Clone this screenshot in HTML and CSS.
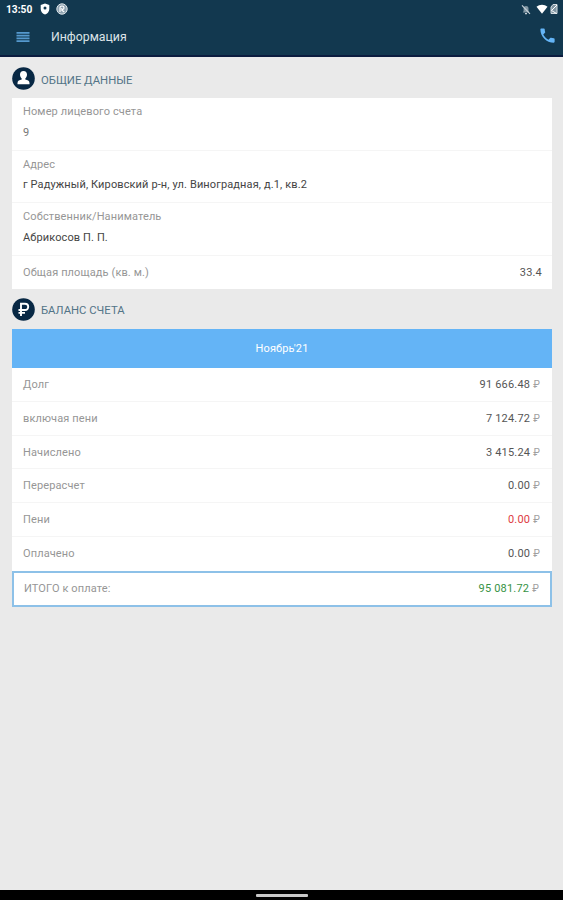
FILE: index.html
```html
<!DOCTYPE html>
<html lang="ru">
<head>
    <meta charset="UTF-8">
    <meta name="viewport" content="width=device-width, initial-scale=1.0">
    <title>Информация</title>
    <link rel="stylesheet" href="styles.css">
</head>
<body>
<header>
    <div class="status-bar">
        <span class="time">13:50</span>
        <svg width="10" height="12" viewBox="0 0 10 12"><path d="M5 0.5L9.3 2V6C9.3 8.6 7.5 10.6 5 11.6C2.5 10.6 0.7 8.6 0.7 6V2Z" fill="#fff"/><circle cx="5" cy="5" r="1.5" fill="#12384f"/></svg>
        <svg class="icon-at" width="12" height="12" viewBox="0 0 12 12"><circle cx="6" cy="6" r="5.2" fill="#8ea2b0" stroke="#dfe6ea" stroke-width="1"/><path d="M4 9V4.5C4 2.5 8 2.5 8 4.7C8 6.8 5.5 7 5.5 5.3M5.5 7L8.3 9" fill="none" stroke="#fff" stroke-width="1.2"/></svg>
        <div class="status-right">
            <svg width="10" height="11" viewBox="0 0 10 11"><path d="M1.8 8.5H8.2L7.5 7V4.5C7.5 1.3 2.6 1.3 2.6 4.5V7Z" fill="#8398a5"/><path d="M1 1.3L9 9.8M4 9.6H6" fill="none" stroke="#c7d1d8" stroke-width="1.1"/></svg>
            <svg class="icon-wifi" width="12" height="10" viewBox="0 0 12 10"><path d="M0.5 2.8C3.5 0 8.5 0 11.5 2.8L6 9.7Z" fill="#fff"/></svg>
            <svg width="8" height="12" viewBox="0 0 8 12"><path d="M1 4L3 1.5H7V10.5H1Z" fill="#7f94a2" stroke="#d3dce1" stroke-width="1"/><path d="M7 2L1.5 7.5L6.5 10.5" fill="none" stroke="#fff" stroke-width="1"/></svg>
        </div>
    </div>
    <div class="toolbar">
        <svg width="14" height="12" viewBox="0 0 14 12"><path d="M0.5 1.8H13.5M0.5 4.6H13.5M0.5 7.4H13.5M0.5 10.2H13.5" stroke="#5599ce" stroke-width="1.7"/></svg>
        <h1>Информация</h1>
        <svg class="icon-phone" width="19" height="19" viewBox="0 0 24 24"><path d="M6.62 10.79c1.44 2.83 3.76 5.14 6.59 6.59l2.2-2.2c.27-.27.67-.36 1.02-.24 1.12.37 2.33.57 3.57.57.55 0 1 .45 1 1V20c0 .55-.45 1-1 1-9.39 0-17-7.61-17-17 0-.55.45-1 1-1h3.5c.55 0 1 .45 1 1 0 1.25.2 2.45.57 3.57.11.35.03.74-.25 1.02l-2.2 2.2z" fill="#64b4f6"/></svg>
    </div>
</header>
<main>
    <h2 class="section-title title-common">
        <svg width="23" height="23" viewBox="0 0 23 23"><circle cx="11.5" cy="11.5" r="11.3" fill="#082844"/><path d="M11.5 4C13.8 4 15 5.5 15 7.6C15 9.3 14.3 10.6 13.3 11.5V12.6C15.5 13.2 17.5 13.8 17.5 16V17.3H5.5V16C5.5 13.8 7.5 13.2 9.7 12.6V11.5C8.7 10.6 8 9.3 8 7.6C8 5.5 9.2 4 11.5 4Z" fill="#fff"/></svg>
        <span>ОБЩИЕ ДАННЫЕ</span>
    </h2>
    <div class="card">
        <div class="info-row">
            <span class="label">Номер лицевого счета</span>
            <span class="value number">9</span>
        </div>
        <div class="info-row">
            <span class="label">Адрес</span>
            <span class="value">г Радужный, Кировский р-н, ул. Виноградная, д.1, кв.2</span>
        </div>
        <div class="info-row">
            <span class="label">Собственник/Наниматель</span>
            <span class="value">Абрикосов П. П.</span>
        </div>
        <div class="row area">
            <span class="label">Общая площадь (кв. м.)</span>
            <span class="sum">33.4</span>
        </div>
    </div>
    <h2 class="section-title title-balance">
        <svg width="23" height="23" viewBox="0 0 23 23"><circle cx="11.5" cy="11.5" r="11.3" fill="#082844"/><path d="M9 18V5.7H13C17.3 5.7 17.3 12 13 12H6.5M6.500 14.900H13" fill="none" stroke="#fff" stroke-width="1.9"/></svg>
        <span>БАЛАНС СЧЕТА</span>
    </h2>
    <div class="month">Ноябрь'21</div>
    <div class="card balance">
        <div class="row">
            <span class="label">Долг</span>
            <span class="sum">91 666.48 <i>₽</i></span>
        </div>
        <div class="row">
            <span class="label">включая пени</span>
            <span class="sum">7 124.72 <i>₽</i></span>
        </div>
        <div class="row">
            <span class="label">Начислено</span>
            <span class="sum">3 415.24 <i>₽</i></span>
        </div>
        <div class="row">
            <span class="label">Перерасчет</span>
            <span class="sum">0.00 <i>₽</i></span>
        </div>
        <div class="row">
            <span class="label">Пени</span>
            <span class="sum red">0.00 <i>₽</i></span>
        </div>
        <div class="row">
            <span class="label">Оплачено</span>
            <span class="sum">0.00 <i>₽</i></span>
        </div>
    </div>
    <div class="row total">
        <span class="label">ИТОГО к оплате:</span>
        <span class="sum green">95 081.72 <i>₽</i></span>
    </div>
</main>
<footer><div class="home-line"></div></footer>
</body>
</html>
```

FILE: styles.css
```css
* {
    box-sizing: border-box;
}

body {
    display: flex;
    flex-direction: column;
    height: 900px;
    margin: 0;
    background-color: #eaeaea;
    font-family: Roboto, sans-serif;
    font-size: 11px;
    letter-spacing: 0.12px;
}

svg {
    display: block;
    flex: none;
}

header {
    height: 57px;
    background-color: #12384f;
    border-bottom: 2px solid #0b1c3f;
    color: #fff;
}

.status-bar {
    display: flex;
    align-items: center;
    height: 18px;
    padding: 0 5px 0 6px;
}

.time {
    width: 34px;
    font-size: 10.2px;
    font-weight: bold;
    letter-spacing: 0;
}

.icon-at {
    margin-left: 6px;
}

.status-right {
    display: flex;
    align-items: center;
    margin-left: auto;
}

.icon-wifi {
    margin: 0 2px 0 5px;
}

.toolbar {
    display: flex;
    align-items: center;
    height: 37px;
    padding: 0 6px 0 16px;
}

h1 {
    margin: 0 0 0 21px;
    font-size: 12.3px;
    font-weight: normal;
    letter-spacing: 0;
    color: #dde4e8;
}

.icon-phone {
    margin: -2px 0 0 auto;
}

main {
    flex: 1;
    padding: 0 11px 0 12px;
}

.section-title {
    display: flex;
    align-items: center;
    gap: 6px;
    margin: 0;
    font-size: 11.3px;
    font-weight: normal;
    letter-spacing: 0;
    color: #527487;
}

.section-title span {
    padding-top: 3px;
}

.title-common {
    height: 41px;
    padding-top: 2px;
}

.title-balance {
    height: 40px;
}

.card {
    background-color: #fff;
}

.info-row {
    display: flex;
    flex-direction: column;
    height: 52.7px;
    padding: 4px 11px 0;
    line-height: 20.5px;
    border-bottom: 1px solid #f5f5f5;
}

.label {
    color: #969696;
}

.value {
    color: #444;
}

.number {
    color: #777;
}

.row {
    display: flex;
    align-items: center;
    justify-content: space-between;
    height: 33.8px;
    padding: 0 12px 0 11px;
    border-bottom: 1px solid #f5f5f5;
}

.area {
    height: 33px;
    padding-right: 10px;
    border: none;
}

.month {
    height: 39px;
    line-height: 39px;
    background-color: #64b4f6;
    color: #fff;
    text-align: center;
}

.balance .row:last-child {
    border: none;
}

.sum {
    color: #555;
    letter-spacing: 0.2px;
}

.sum i {
    font-style: normal;
    font-size: 10px;
    color: #a0a0a0;
}

.red {
    color: #dd3c42;
}

.green {
    color: #389345;
}

.total {
    height: 36px;
    padding: 0 11px 0 10px;
    background-color: #fff;
    border: 2px solid #8dc1e8;
}

footer {
    height: 10px;
    padding-top: 4px;
    background-color: #000;
}

.home-line {
    width: 52px;
    height: 3px;
    margin: 0 auto;
    border-radius: 1px;
    background-color: #c8c8c8;
}
```
